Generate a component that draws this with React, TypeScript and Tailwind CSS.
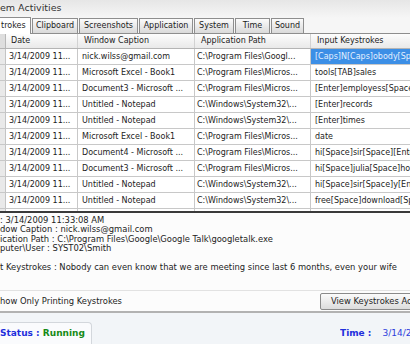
import React from 'react';

const tabs = [
  { label: 'trokes', w: 'w-[31px]', active: true },
  { label: 'Clipboard', w: 'w-[46px]' },
  { label: 'Screenshots', w: 'w-[59px]' },
  { label: 'Application', w: 'w-[54px]' },
  { label: 'System', w: 'w-[40px]' },
  { label: 'Time', w: 'w-[35px]' },
  { label: 'Sound', w: 'w-[33px]' },
];

const rows = [
  ['nick.wilss@gmail.com', 'C:\\Program Files\\Googl...', '[Caps]N[Caps]obody[Space]can[Space]even...'],
  ['Microsoft Excel - Book1', 'C:\\Program Files\\Micros...', 'tools[TAB]sales'],
  ['Document3 - Microsoft ...', 'C:\\Program Files\\Micros...', '[Enter]employess[Space]list...'],
  ['Untitled - Notepad', 'C:\\Windows\\System32\\...', '[Enter]records'],
  ['Untitled - Notepad', 'C:\\Windows\\System32\\...', '[Enter]times'],
  ['Microsoft Excel - Book1', 'C:\\Program Files\\Micros...', 'date'],
  ['Document4 - Microsoft ...', 'C:\\Program Files\\Micros...', 'hi[Space]sir[Space][Enter]...'],
  ['Document3 - Microsoft ...', 'C:\\Program Files\\Micros...', 'hi[Space]julia[Space]how...'],
  ['Untitled - Notepad', 'C:\\Windows\\System32\\...', 'hi[Space]sir[Space]y[Enter]...'],
  ['Untitled - Notepad', 'C:\\Windows\\System32\\...', 'free[Space]download[Space]...'],
];

const cols = 'grid grid-cols-[6px_72px_117px_116px_170px]';

const App = () => {
  return (
    <div className="w-[410px] h-[344px] overflow-hidden flex flex-col bg-[#f7f7f7] text-[#1c1c1c] font-['DejaVu_Sans',sans-serif] text-[8px]">
      {/* title */}
      <div className="h-[18px] shrink-0 bg-gradient-to-b from-[#e6e6e6] to-[#f6f6f6] text-[9.5px] leading-[12px] pt-[2px] text-[#333] whitespace-nowrap">
        em Activities
      </div>

      {/* tabs */}
      <div className="h-[16px] shrink-0 flex items-end gap-[1px] border-b border-[#8e8e8e] bg-[#f6f6f6]">
        {tabs.map((t) => (
          <div
            key={t.label}
            className={
              t.active
                ? `${t.w} h-[17px] -mb-px bg-white border-t border-r border-[#8e8e8e] leading-[15px] pl-[1px] whitespace-nowrap`
                : `${t.w} h-[15px] bg-gradient-to-b from-[#fbfbfb] to-[#dadada] border border-b-0 border-[#8e8e8e] leading-[14px] text-center whitespace-nowrap`
            }
          >
            {t.label}
          </div>
        ))}
      </div>

      {/* table */}
      <div className="h-[177px] shrink-0 overflow-hidden bg-white">
        <div className={`${cols} h-[15px] bg-gradient-to-b from-[#fdfdfd] to-[#e9e9e9] border-b border-[#b4b4b4] leading-[14px]`}>
          <div className="bg-[#dedede] border-r border-[#b8b8b8]" />
          <div className="pl-[5px] border-r border-[#d2d2d2]">Date</div>
          <div className="pl-[6px] border-r border-[#d2d2d2]">Window Caption</div>
          <div className="pl-[6px] border-r border-[#d2d2d2]">Application Path</div>
          <div className="pl-[6px] whitespace-nowrap">Input Keystrokes</div>
        </div>
        {rows.map((r, i) => (
          <div key={i} className={`${cols} h-[16px] leading-[15px] border-b border-[#c8c8c8] whitespace-nowrap`}>
            <div className="bg-[#e9e9e9] border-r border-[#c4c4c4]" />
            <div className="pl-[3px] border-r border-[#c8c8c8] overflow-hidden">3/14/2009 11...</div>
            <div className="pl-[4px] border-r border-[#c8c8c8] overflow-hidden">{r[0]}</div>
            <div className="pl-[2px] border-r border-[#c8c8c8] overflow-hidden">{r[1]}</div>
            <div
              className={
                i === 0
                  ? 'pl-[4px] bg-[#3c8fe6] text-[#e4efff] overflow-hidden'
                  : 'pl-[4px] overflow-hidden'
              }
            >
              {r[2]}
            </div>
          </div>
        ))}
        <div className={`${cols} h-[4px]`}>
          <div className="bg-[#e9e9e9] border-r border-[#c4c4c4]" />
          <div className="border-r border-[#c8c8c8]" />
          <div className="border-r border-[#c8c8c8]" />
          <div className="border-r border-[#c8c8c8]" />
          <div />
        </div>
      </div>
      <div className="h-[2px] shrink-0 bg-[#3a3a3a]" />

      {/* details */}
      <div className="h-[77px] shrink-0 bg-[#fcfcfc] pt-[3px] text-[8.4px] leading-[9.4px] whitespace-nowrap text-[#222]">
        <div>: 3/14/2009 11:33:08 AM</div>
        <div>dow Caption : nick.wilss@gmail.com</div>
        <div>ication Path : C:\Program Files\Google\Google Talk\googletalk.exe</div>
        <div>puter\User : SYST02\Smith</div>
        <div className="h-[9.4px]" />
        <div>t Keystrokes : Nobody can even know that we are meeting since last 6 months, even your wife</div>
      </div>

      {/* options row */}
      <div className="h-[21px] shrink-0 flex items-center justify-between bg-[#fcfcfc] border-t border-[#e2e2e2]">
        <span className="whitespace-nowrap text-[8.4px]">how Only Printing Keystrokes</span>
        <div className="ml-auto w-[110px] shrink-0 -mr-[20px] h-[17px] rounded-[2px] border border-[#8a8a8a] bg-gradient-to-b from-[#fbfbfb] to-[#dcdcdc] leading-[15px] pl-[10px] text-[8.4px] whitespace-nowrap">
          View Keystrokes Activity
        </div>
      </div>
      <div className="h-[2px] shrink-0 bg-[#b2b2b2]" />

      {/* status bar */}
      <div className="flex-1 flex items-end justify-between bg-[#f2f5f8] pt-[9px]">
        <div className="w-[92px] h-full bg-[#fafbfd] border-t border-r border-[#d3d7dc] rounded-tr-[4px] text-[9px] font-bold leading-[20px] whitespace-nowrap">
          <span className="text-[#1f2fdc]">Status : </span>
          <span className="text-[#168a16]">Running</span>
        </div>
        <div className="w-[70px] shrink-0 h-full text-[9px] leading-[22px] whitespace-nowrap overflow-hidden">
          <span className="font-bold text-[#1f2fdc]">Time :</span>
          <span className="ml-[11px] text-[#2d3fdc]">3/14/2009 11:33:08 AM</span>
        </div>
      </div>
      <div className="h-[2px] shrink-0 bg-[#333]" />
    </div>
  );
};

export default App;
